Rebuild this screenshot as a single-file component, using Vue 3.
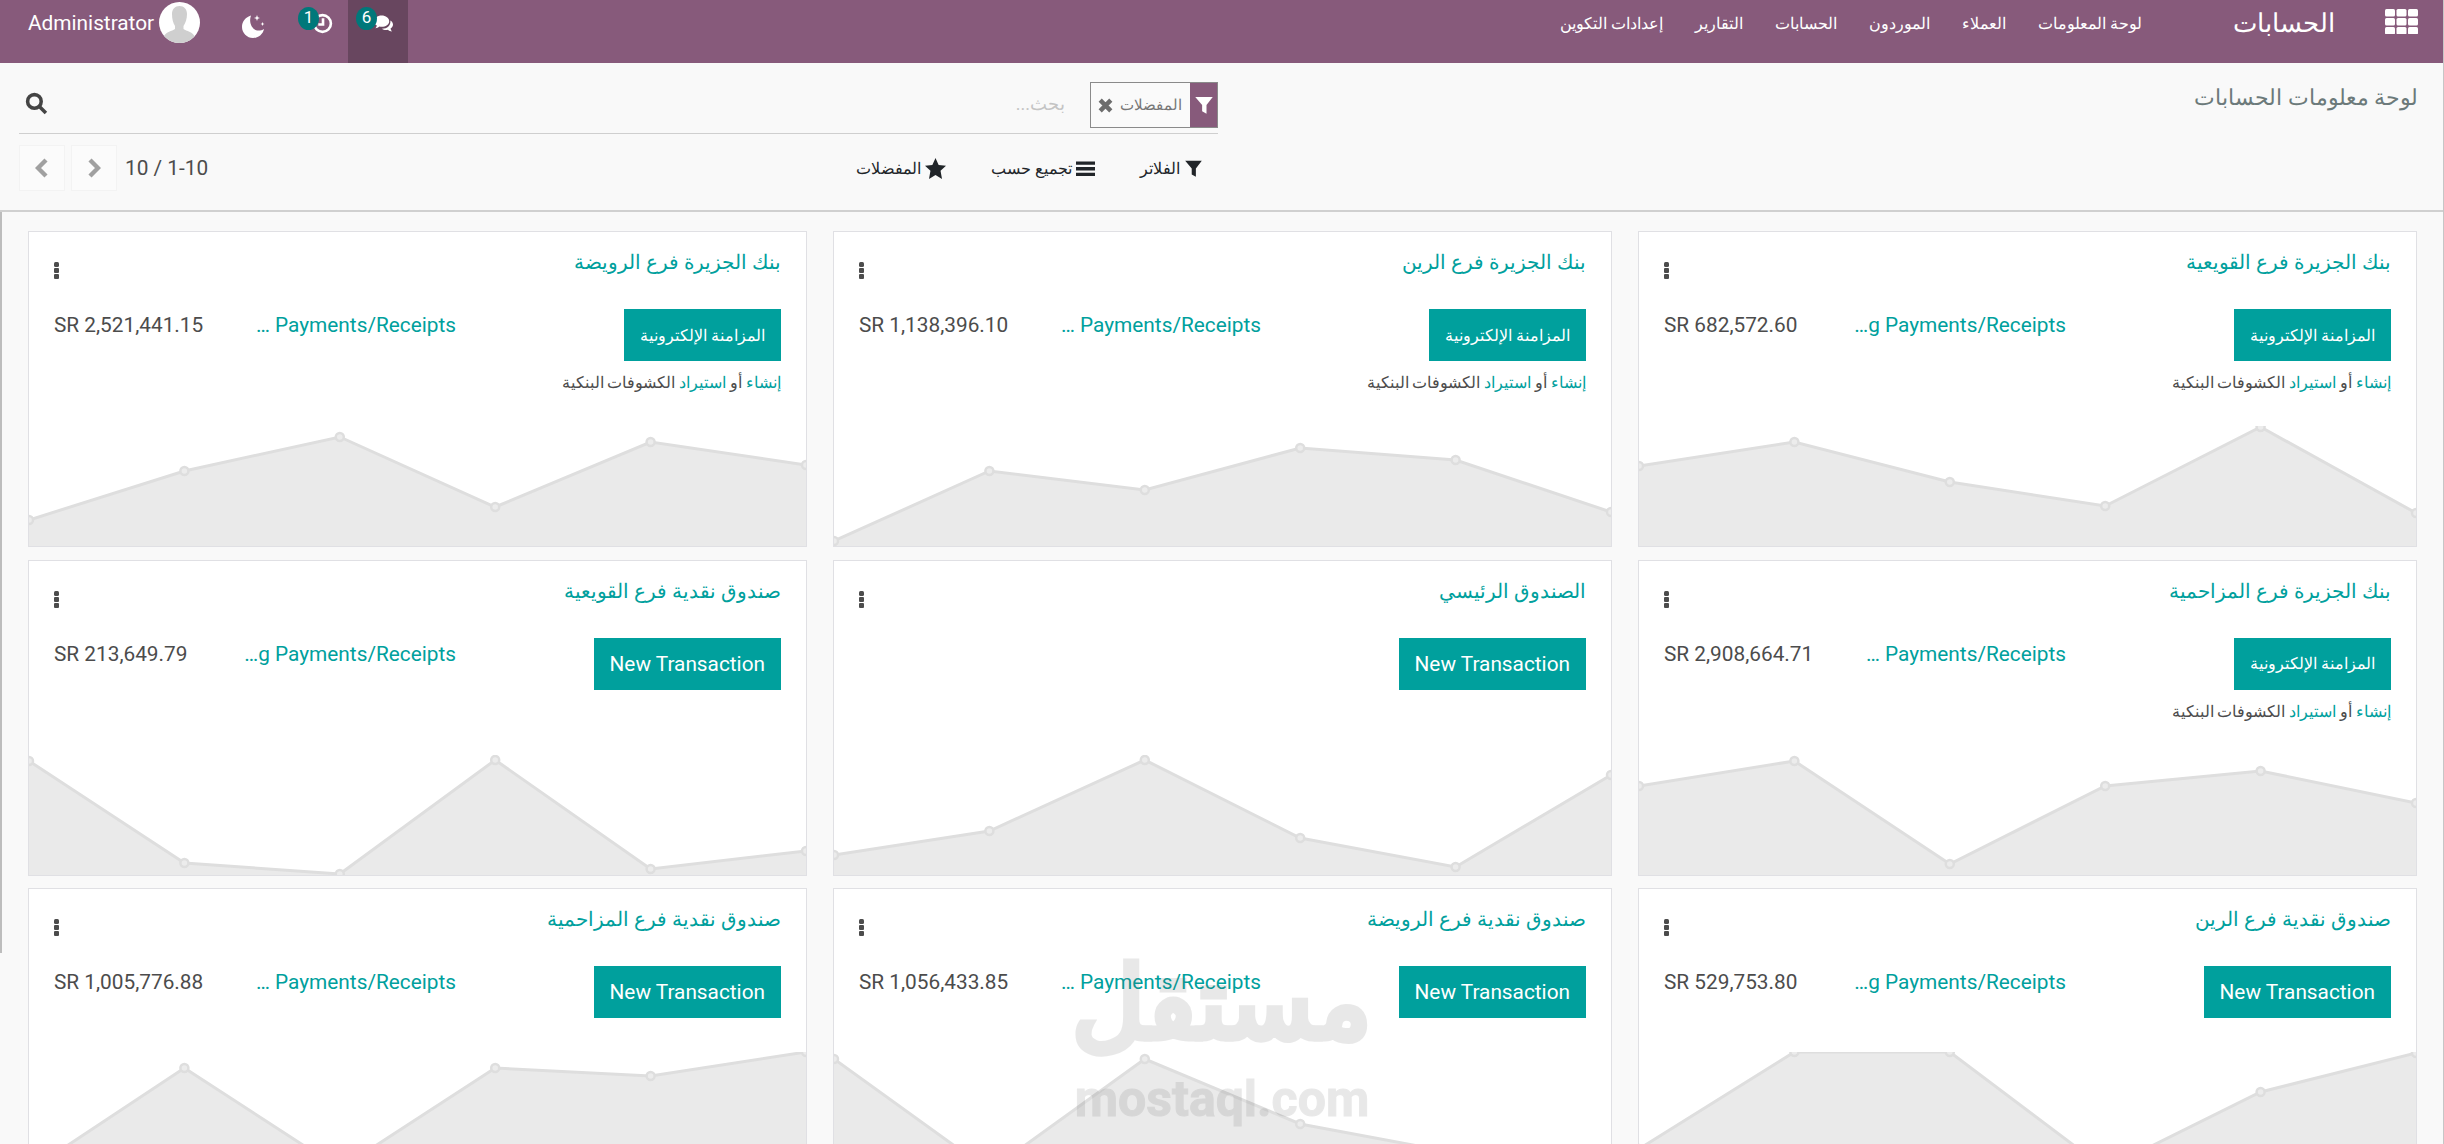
<script setup>
// Accounting dashboard: three columns of journal cards under a purple navbar.
const menu = ["لوحة المعلومات", "العملاء", "الموردون", "الحسابات", "التقارير", "إعدادات التكوين"];

const STEP = 777 / 5;

const journals = [
    { name: "بنك الجزيرة فرع القويعية", amount: "SR 682,572.60", bank: true, points: [40, 16, 56, 80, 1, 87] },
    { name: "بنك الجزيرة فرع الرين", amount: "SR 1,138,396.10", bank: true, points: [115, 45, 64, 22, 34, 86] },
    { name: "بنك الجزيرة فرع الرويضة", amount: "SR 2,521,441.15", bank: true, points: [94, 45, 11, 81, 16, 39] },
    { name: "بنك الجزيرة فرع المزاحمية", amount: "SR 2,908,664.71", bank: true, points: [31, 6, 109, 31, 16, 48] },
    { name: "الصندوق الرئيسي", amount: "", bank: false, points: [100, 76, 5, 83, 112, 20] },
    { name: "صندوق نقدية فرع القويعية", amount: "SR 213,649.79", bank: false, points: [6, 108, 119, 5, 114, 96] },
    { name: "صندوق نقدية فرع الرين", amount: "SR 529,753.80", bank: false, points: [97, 0, 0, 117, 40, 1] },
    { name: "صندوق نقدية فرع الرويضة", amount: "SR 1,056,433.85", bank: false, points: [7, 119, 7, 72, 101, 110] },
    { name: "صندوق نقدية فرع المزاحمية", amount: "SR 1,005,776.88", bank: false, points: [119, 16, 117, 16, 24, 0] },
];

// Chart points are listed left to right, as offsets from the top of the chart.
function linePoints(points) {
    return points.map((y, i) => `${i * STEP},${y}`).join(" ");
}
function areaPoints(points) {
    return `0,120 ${linePoints(points)} 777,120`;
}
</script>

<template>
    <div class="page" dir="rtl">
        <header class="navbar">
            <svg class="apps" viewBox="0 0 33 25" aria-hidden="true">
                <template v-for="row in 3" :key="row">
                    <rect v-for="col in 3" :key="col" :x="(col - 1) * 11.5" :y="(row - 1) * 9" width="10" height="7.5" rx="1.5" />
                </template>
            </svg>
            <span class="brand">الحسابات</span>
            <nav class="menu">
                <a v-for="item in menu" :key="item">{{ item }}</a>
            </nav>
            <div class="systray">
                <a class="tray-item tray-chat">
                    <svg class="tray-icon chat" viewBox="0 0 20 18" aria-hidden="true">
                        <path d="M8 0c4.400 0 8 2.600 8 6s-3.600 6-8 6c-.8 0-1.500-.1-2.200-.3C4.600 12.700 3 13.300 1.500 13.500c.8-.9 1.300-1.800 1.500-3C1.100 9.400 0 7.800 0 6c0-3.400 3.600-6 8-6z" />
                        <path d="M17.200 5.200C18.900 6.200 20 7.800 20 9.600c0 1.700-1 3.200-2.600 4.200.2 1.200.7 2.200 1.500 3.200-1.600-.2-3.100-.9-4.300-1.900-.6.1-1.200.2-1.800.2-1.800 0-3.400-.5-4.700-1.400 5.600.2 9.900-3.400 9.100-8.700z" />
                    </svg>
                    <span class="badge">6</span>
                </a>
                <a class="tray-item tray-clock">
                    <svg class="tray-icon clock" viewBox="0 0 20 20" aria-hidden="true">
                        <circle cx="10" cy="10" r="8" />
                        <path d="M10.500 5v6H6" />
                    </svg>
                    <span class="badge">1</span>
                </a>
                <svg class="moon" viewBox="0 0 24 24" aria-hidden="true">
                    <path d="M9 1.500C3.800 3 0 7.400 0 13c0 6 5 11 11 11 5.400 0 10-3.800 11-9-1.600 1-3.500 1.500-5.500 1.500C10.600 16.500 6.200 9 9 1.500z" />
                    <path d="M15 1l.8 2.200L18 4l-2.200.8L15 7l-.8-2.200L12 4l2.200-.8zM20.500 8l.6 1.400 1.400.6-1.400.6-.6 1.400-.6-1.400-1.400-.6 1.400-.6z" />
                </svg>
                <div class="user">
                    <svg class="avatar" viewBox="0 0 41 41" aria-hidden="true">
                        <clipPath id="avatar-clip"><circle cx="20.500" cy="20.500" r="20.500" /></clipPath>
                        <g clip-path="url(#avatar-clip)">
                            <rect width="41" height="41" fill="#fff" />
                            <path fill="#cfcfcf" d="M13 12c0-5 3-8 7.500-8s7.500 3 7.500 8c0 5-1.500 9-3.500 12v3c3 2 9 3 11 7v7H5v-7c2-4 8-5 11-7v-3c-2-3-3-7-3-12z" />
                        </g>
                    </svg>
                    <span class="user-name">Administrator</span>
                </div>
            </div>
        </header>

        <section class="control-panel">
            <h1 class="page-title">لوحة معلومات الحسابات</h1>
            <div class="search">
                <div class="facet">
                    <span class="facet-icon">
                        <svg viewBox="0 0 16 16" aria-hidden="true"><path d="M1 1.500h14L10 8v7L6.500 13V8z" /></svg>
                    </span>
                    <span class="facet-label">المفضلات</span>
                    <svg class="facet-remove" viewBox="0 0 16 16" aria-hidden="true"><path d="M3 3l10 10M13 3L3 13" /></svg>
                </div>
                <span class="placeholder">بحث...</span>
                <svg class="search-icon" viewBox="0 0 22 22" aria-hidden="true">
                    <circle cx="9" cy="9" r="6.500" />
                    <path d="M14 14l6 6" />
                </svg>
            </div>
            <div class="empty-cell"></div>
            <div class="toolbar">
                <a class="tool">
                    <svg viewBox="0 0 16 16" aria-hidden="true"><path d="M1 1.500h14L10 8v7L6.500 13V8z" /></svg>
                    الفلاتر
                </a>
                <a class="tool">
                    <svg viewBox="0 0 16 16" aria-hidden="true"><path d="M0 2h16v2.800H0zM0 6.800h16v2.800H0zM0 11.600h16v2.800H0z" /></svg>
                    تجميع حسب
                </a>
                <a class="tool">
                    <svg class="star" viewBox="0 0 20 20" aria-hidden="true"><path d="M10 0l3 6.600 7 .8-5.200 4.800L16.200 20 10 16.300 3.800 20l1.400-7.800L0 7.400l7-.8z" /></svg>
                    المفضلات
                </a>
                <div class="pager">
                    <span class="pager-text">1-10 / 10</span>
                    <button type="button" class="pager-btn" aria-label="next">
                        <svg viewBox="0 0 14 20" aria-hidden="true"><path d="M3 2l8 8-8 8" /></svg>
                    </button>
                    <button type="button" class="pager-btn" aria-label="previous">
                        <svg viewBox="0 0 14 20" aria-hidden="true"><path d="M11 2l-8 8 8 8" /></svg>
                    </button>
                </div>
            </div>
        </section>

        <main class="cards">
            <article v-for="j in journals" :key="j.name" class="card">
                <div class="card-head">
                    <a class="card-title">{{ j.name }}</a>
                    <svg class="kebab" viewBox="0 0 5 17" aria-hidden="true">
                        <rect width="5" height="5" y="0" rx="1.500" />
                        <rect width="5" height="5" y="6" rx="1" />
                        <rect width="5" height="5" y="12" rx="1" />
                    </svg>
                </div>
                <div class="card-body">
                    <div class="card-action">
                        <button type="button" class="primary" :class="{ 'primary-ar': j.bank }">
                            {{ j.bank ? "المزامنة الإلكترونية" : "New Transaction" }}
                        </button>
                    </div>
                    <div v-if="j.amount" class="card-figures">
                        <a class="outstanding">Outstanding Payments/Receipts</a>
                        <span class="amount" dir="ltr">{{ j.amount }}</span>
                    </div>
                </div>
                <p v-if="j.bank" class="statement">
                    <a>إنشاء</a> أو <a>استيراد</a> الكشوفات البنكية
                </p>
                <svg class="chart" viewBox="0 0 777 120" aria-hidden="true">
                    <polygon class="chart-area" :points="areaPoints(j.points)" />
                    <polyline class="chart-line" :points="linePoints(j.points)" />
                    <circle v-for="(y, i) in j.points" :key="i" class="chart-dot" :cx="i * STEP" :cy="y" r="4" />
                </svg>
            </article>
        </main>

        <div class="scroll-thumb"></div>
        <div class="watermark" dir="rtl">
            <span class="watermark-ar">مستقل</span>
            <span class="watermark-en">mostaql.com</span>
        </div>
    </div>
</template>

<style scoped>
.page {
    position: relative;
    box-sizing: border-box;
    height: 1144px;
    overflow: hidden;
    background: #f9f9f9;
    border-right: 1px solid #c6c6c6;
    font-family: Roboto, "Liberation Sans", "Noto Sans", sans-serif;
    color: #4c4c4c;
}

/* navbar */
.navbar {
    display: flex;
    align-items: flex-start;
    height: 63px;
    padding-right: 25px;
    background: #875a7b;
    color: #fff;
}
.apps {
    width: 33px;
    height: 25px;
    margin-top: 9px;
    fill: #fff;
}
.brand {
    margin-right: 50px;
    font-size: 26px;
    line-height: 46px;
}
.menu {
    display: flex;
    gap: 32px;
    margin-right: 91px;
    font-size: 16px;
    line-height: 48px;
}
.systray {
    display: flex;
    align-items: flex-start;
    margin-right: auto;
    margin-left: 28px;
}
.tray-item {
    position: relative;
    display: block;
    height: 63px;
}
.tray-chat {
    width: 60px;
    background: #68465f;
}
.tray-clock {
    width: 60px;
}
.tray-icon {
    position: absolute;
}
.chat {
    left: 26px;
    top: 15px;
    width: 19px;
    height: 18px;
    fill: #fff;
}
.clock {
    left: 24px;
    top: 13px;
    width: 21px;
    height: 21px;
    fill: none;
    stroke: #fff;
    stroke-width: 2.500;
}
.badge {
    position: absolute;
    top: 7px;
    width: 21px;
    height: 23px;
    border-radius: 50%;
    background: #00787a;
    font-size: 17px;
    line-height: 21px;
    text-align: center;
    color: #fff;
}
.tray-chat .badge {
    left: 8px;
}
.tray-clock .badge {
    left: 10px;
}
.moon {
    width: 24px;
    height: 24px;
    margin: 14px 22px 0 42px;
    fill: #fff;
}
.user {
    display: flex;
    align-items: center;
    gap: 5px;
    height: 45px;
}
.avatar {
    width: 41px;
    height: 41px;
}
.user-name {
    font-size: 20.800px;
}

/* control panel */
.control-panel {
    display: grid;
    grid-template-columns: 1fr 1199px;
    grid-template-rows: 71px 76px;
    padding: 0 25px 0 19px;
    border-bottom: 2px solid #d0d0d0;
    box-sizing: border-box;
    height: 149px;
}
.page-title {
    margin: 0;
    padding-top: 22px;
    font-size: 22px;
    font-weight: 400;
    color: #6c7a7a;
}
.search {
    display: flex;
    align-items: flex-start;
    padding-top: 19px;
    box-sizing: border-box;
    height: 71px;
    border-bottom: 1px solid #cfcfcf;
}
.facet {
    display: flex;
    align-items: center;
    box-sizing: border-box;
    width: 128px;
    height: 46px;
    border: 1px solid #8a8a8a;
    background: #fafafa;
}
.facet-icon {
    display: flex;
    align-items: center;
    justify-content: center;
    width: 27px;
    height: 100%;
    background: #875a7b;
}
.facet-icon svg {
    width: 20px;
    height: 20px;
    fill: #fff;
}
.facet-label {
    margin-right: 8px;
    font-size: 15px;
    color: #777;
}
.facet-remove {
    width: 17px;
    height: 17px;
    margin-right: 6px;
    fill: none;
    stroke: #6d6d6d;
    stroke-width: 4.200;
}
.placeholder {
    margin: 11px 25px 0 0;
    font-size: 18px;
    color: #c4c4c4;
}
.search-icon {
    width: 23px;
    height: 23px;
    margin: 10px auto 0 6px;
    fill: none;
    stroke: #444;
    stroke-width: 3.400;
}
.toolbar {
    display: flex;
    align-items: center;
    padding-right: 15px;
    gap: 45px;
    height: 76px;
    box-sizing: border-box;
    padding-bottom: 8px;
}
.tool {
    display: flex;
    align-items: center;
    gap: 4px;
    font-size: 16px;
    color: #212529;
}
.tool svg {
    width: 19px;
    height: 19px;
    fill: #212529;
}
.tool svg.star {
    width: 21px;
    height: 21px;
}
.pager {
    display: flex;
    align-items: center;
    gap: 6px;
    margin-right: auto;
    color: #4c4c4c;
}
.pager-text {
    margin-left: 2px;
    font-size: 20.800px;
}
.pager-btn {
    display: flex;
    align-items: center;
    justify-content: center;
    width: 46px;
    height: 46px;
    padding: 0;
    border: 1px solid #f3f3f3;
    background: #fbfbfb;
}
.pager-btn svg {
    width: 14px;
    height: 20px;
    fill: none;
    stroke: #a0a0a0;
    stroke-width: 4.400;
}

/* cards */
.cards {
    display: grid;
    grid-template-columns: repeat(3, 779px);
    column-gap: 26px;
    row-gap: 12.500px;
    padding: 19px 26px 0 28px;
}
.card {
    display: flex;
    flex-direction: column;
    box-sizing: border-box;
    background: #fff;
    border: 1px solid #e0e0e4;
}
.card-head {
    display: flex;
    justify-content: space-between;
    height: 77px;
    padding: 12px 25px 0 25px;
    box-sizing: border-box;
}
.card-title {
    font-size: 20.300px;
    line-height: 36px;
    color: #00a09d;
}
.kebab {
    width: 5px;
    height: 17px;
    margin-top: 18px;
    fill: #4c4c4c;
}
.card-body {
    display: grid;
    grid-template-columns: 325px 1fr;
    height: 52px;
    padding: 0 25px;
    margin-bottom: 34px;
}
.card:has(.statement) .card-body {
    margin-bottom: 0;
}
.primary {
    height: 52px;
    padding: 0 16px;
    border: none;
    background: #00a09d;
    color: #fff;
    font-family: inherit;
    font-size: 20.800px;
}
.primary-ar {
    font-size: 16px;
}
.card-figures {
    display: flex;
    gap: 50px;
    min-width: 0;
    padding-top: 1px;
    line-height: 30px;
    font-size: 20.800px;
}
.outstanding {
    flex: 1;
    min-width: 0;
    overflow: hidden;
    white-space: nowrap;
    text-overflow: ellipsis;
    color: #00a09d;
}
.amount {
    flex: none;
    color: #4c4c4c;
}
.statement {
    height: 31px;
    margin: 0 0 34px;
    padding: 12px 25px 0;
    box-sizing: border-box;
    font-size: 15.500px;
    line-height: 20px;
    color: #4c4c4c;
}
.statement a {
    color: #00a09d;
}
.chart {
    display: block;
    width: 100%;
    height: 120px;
    margin-top: auto;
    flex: none;
}
.chart-area {
    fill: #eaeaea;
}
.chart-line {
    fill: none;
    stroke: #dedede;
    stroke-width: 3;
}
.chart-dot {
    fill: #ececec;
    stroke: #dedede;
    stroke-width: 2.500;
}

/* overlays */
.scroll-thumb {
    position: absolute;
    left: 0;
    top: 212px;
    width: 2px;
    height: 741px;
    background: #bdbdbd;
}
.watermark {
    position: absolute;
    left: 1076px;
    top: 954px;
    width: 292px;
    display: flex;
    flex-direction: column;
    align-items: center;
    pointer-events: none;
    color: #646464;
    opacity: 0.14;
    font-weight: 700;
}
.watermark-ar {
    font-size: 100px;
    line-height: 100px;
    -webkit-text-stroke: 4px #646464;
}
.watermark-en {
    margin-top: 20px;
    font-size: 50px;
    line-height: 50px;
    -webkit-text-stroke: 1px #646464;
}
</style>

<style>
body {
    margin: 0;
}
</style>
